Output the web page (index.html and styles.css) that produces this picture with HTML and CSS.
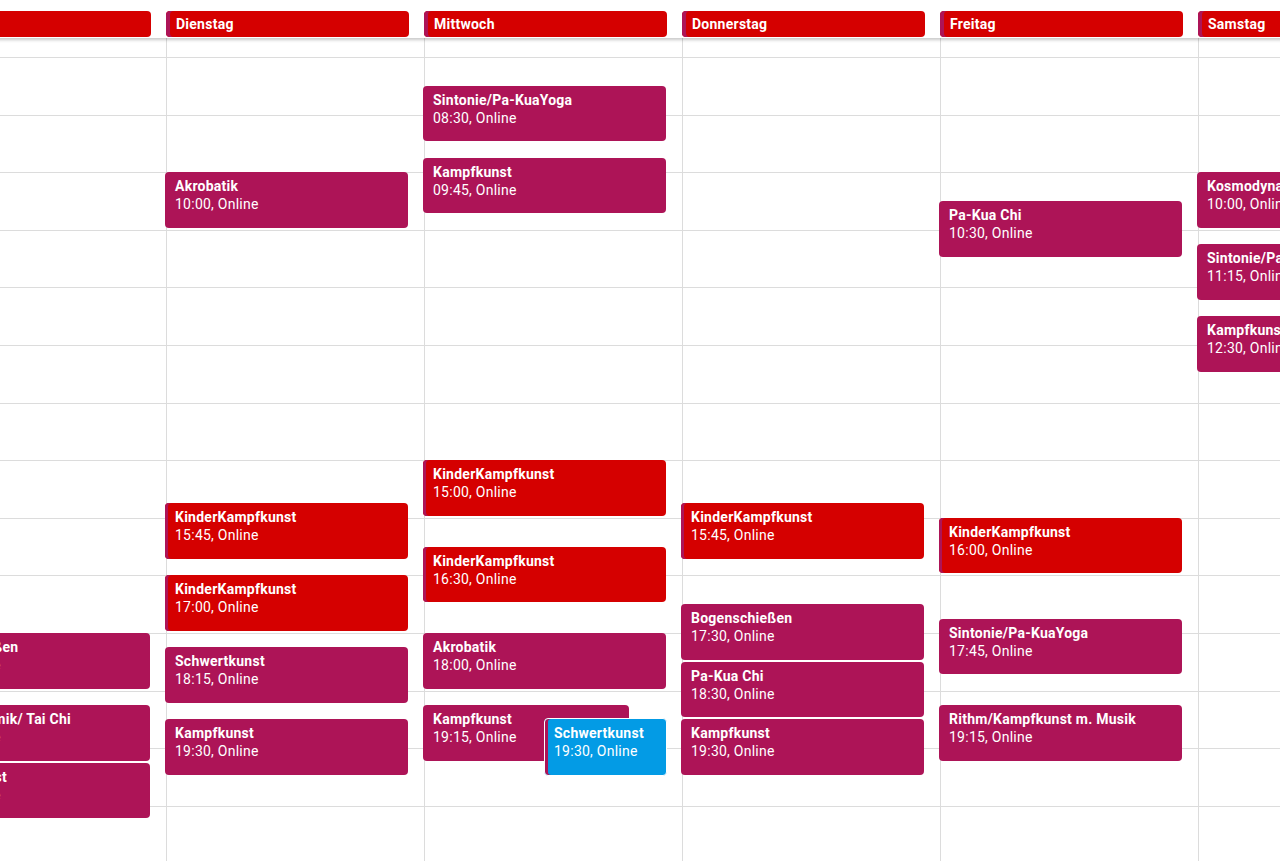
FILE: index.html
```html
<!DOCTYPE html>
<html lang="de">
<head>
    <meta charset="UTF-8">
    <meta name="viewport" content="width=device-width, initial-scale=1.0">
    <title>Wochenplan</title>
    <link rel="stylesheet" href="styles.css">
</head>
<body>
    <div class="calendar">
        <!-- Tage -->
        <div class="head">
            <div class="head-cell"><div class="day-label">Montag</div></div>
            <div class="head-cell"><div class="day-label">Dienstag</div></div>
            <div class="head-cell"><div class="day-label">Mittwoch</div></div>
            <div class="head-cell"><div class="day-label">Donnerstag</div></div>
            <div class="head-cell"><div class="day-label">Freitag</div></div>
            <div class="head-cell"><div class="day-label">Samstag</div></div>
            <div class="head-cell"><div class="day-label">Sonntag</div></div>
        </div>

        <div class="body">
            <!-- Stundenlinien 08:00 - 21:00 -->
            <div class="hours">
                <div class="hour"></div><div class="hour"></div><div class="hour"></div><div class="hour"></div>
                <div class="hour"></div><div class="hour"></div><div class="hour"></div><div class="hour"></div>
                <div class="hour"></div><div class="hour"></div><div class="hour"></div><div class="hour"></div>
                <div class="hour"></div><div class="hour"></div>
            </div>

            <div class="days">
                <!-- Montag -->
                <div class="day">
                    <div class="event" style="top: 595px"><b>Bogenschießen</b><span>18:00, Online</span></div>
                    <div class="event" style="top: 667px"><b>Kosmodynamik/ Tai Chi</b><span>19:15, Online</span></div>
                    <div class="event" style="top: 724.6px"><b>Schwertkunst</b><span>20:15, Online</span></div>
                </div>
                <!-- Dienstag -->
                <div class="day">
                    <div class="event" style="top: 134.2px"><b>Akrobatik</b><span>10:00, Online</span></div>
                    <div class="event kids" style="top: 465.4px"><b>KinderKampfkunst</b><span>15:45, Online</span></div>
                    <div class="event kids" style="top: 537.4px"><b>KinderKampfkunst</b><span>17:00, Online</span></div>
                    <div class="event" style="top: 609.4px"><b>Schwertkunst</b><span>18:15, Online</span></div>
                    <div class="event" style="top: 681.4px"><b>Kampfkunst</b><span>19:30, Online</span></div>
                </div>
                <!-- Mittwoch -->
                <div class="day">
                    <div class="event" style="top: 47.8px"><b>Sintonie/Pa-KuaYoga</b><span>08:30, Online</span></div>
                    <div class="event" style="top: 119.8px"><b>Kampfkunst</b><span>09:45, Online</span></div>
                    <div class="event kids" style="top: 422.2px"><b>KinderKampfkunst</b><span>15:00, Online</span></div>
                    <div class="event kids" style="top: 508.6px"><b>KinderKampfkunst</b><span>16:30, Online</span></div>
                    <div class="event" style="top: 595px"><b>Akrobatik</b><span>18:00, Online</span></div>
                    <div class="event" style="top: 667px; width: 206px"><b>Kampfkunst</b><span>19:15, Online</span></div>
                    <div class="event guest" style="top: 680.4px; left: 119px; width: 123px"><b>Schwertkunst</b><span>19:30, Online</span></div>
                </div>
                <!-- Donnerstag -->
                <div class="day">
                    <div class="event kids" style="top: 465.4px"><b>KinderKampfkunst</b><span>15:45, Online</span></div>
                    <div class="event" style="top: 566.2px"><b>Bogenschießen</b><span>17:30, Online</span></div>
                    <div class="event" style="top: 623.8px"><b>Pa-Kua Chi</b><span>18:30, Online</span></div>
                    <div class="event" style="top: 681.4px"><b>Kampfkunst</b><span>19:30, Online</span></div>
                </div>
                <!-- Freitag -->
                <div class="day">
                    <div class="event" style="top: 163px"><b>Pa-Kua Chi</b><span>10:30, Online</span></div>
                    <div class="event kids" style="top: 479.8px"><b>KinderKampfkunst</b><span>16:00, Online</span></div>
                    <div class="event" style="top: 580.6px"><b>Sintonie/Pa-KuaYoga</b><span>17:45, Online</span></div>
                    <div class="event" style="top: 667px"><b>Rithm/Kampfkunst m. Musik</b><span>19:15, Online</span></div>
                </div>
                <!-- Samstag -->
                <div class="day">
                    <div class="event" style="top: 134.2px"><b>Kosmodynamik</b><span>10:00, Online</span></div>
                    <div class="event" style="top: 206.2px"><b>Sintonie/Pa-KuaYoga</b><span>11:15, Online</span></div>
                    <div class="event" style="top: 278.2px"><b>Kampfkunst</b><span>12:30, Online</span></div>
                </div>
                <!-- Sonntag -->
                <div class="day"></div>
            </div>
        </div>
    </div>
</body>
</html>
```

FILE: styles.css
```css
body {
    margin: 0;
    font-family: Roboto, "Liberation Sans", Arial, sans-serif;
    background: #fff;
    overflow: hidden;
    height: 861px;
}
.calendar {
    margin-left: -92px;
    width: 1806px;
}
.head {
    display: flex;
    height: 38px;
    box-sizing: border-box;
    padding-top: 11px;
    background: #fff;
    position: relative;
    z-index: 2;
    box-shadow: 0 2px 3px rgba(0, 0, 0, 0.22);
}
.head-cell {
    flex: 0 0 258px;
}
.day-label {
    width: 243px;
    height: 26px;
    line-height: 26px;
    box-sizing: border-box;
    padding-left: 10px;
    background: #d50000;
    box-shadow: inset 4px 0 #ad1457;
    border-radius: 4px;
    color: #fff;
    font-size: 14px;
    font-weight: bold;
    letter-spacing: 0.25px;
}
.body {
    position: relative;
    height: 823px;
}
.hours {
    padding-top: 19px;
}
.hour {
    height: 57.6px;
    box-sizing: border-box;
    border-top: 1px solid #dcdcdc;
}
.days {
    position: absolute;
    top: 0;
    left: 0;
    bottom: 0;
    display: flex;
}
.day {
    flex: 0 0 258px;
    box-sizing: border-box;
    border-left: 1px solid #dcdcdc;
    position: relative;
}
.event {
    position: absolute;
    left: -2px;
    width: 243px;
    height: 55.6px;
    box-sizing: border-box;
    padding: 5px 10px 0;
    background: #ad1457;
    border-radius: 4px;
    color: #fff;
    font-size: 14px;
    line-height: 18px;
    letter-spacing: 0.25px;
    white-space: nowrap;
    overflow: hidden;
}
.event b,
.event span {
    display: block;
}
.event b {
    font-weight: bold;
}
.kids {
    background: #d50000;
    box-shadow: inset 3px 0 #ad1457;
}
.guest {
    height: 57.6px;
    padding: 5px 9px 0;
    background: #039be5;
    border: 1px solid #fff;
    box-shadow: inset 3px 0 #ad1457;
    z-index: 1;
}
```
